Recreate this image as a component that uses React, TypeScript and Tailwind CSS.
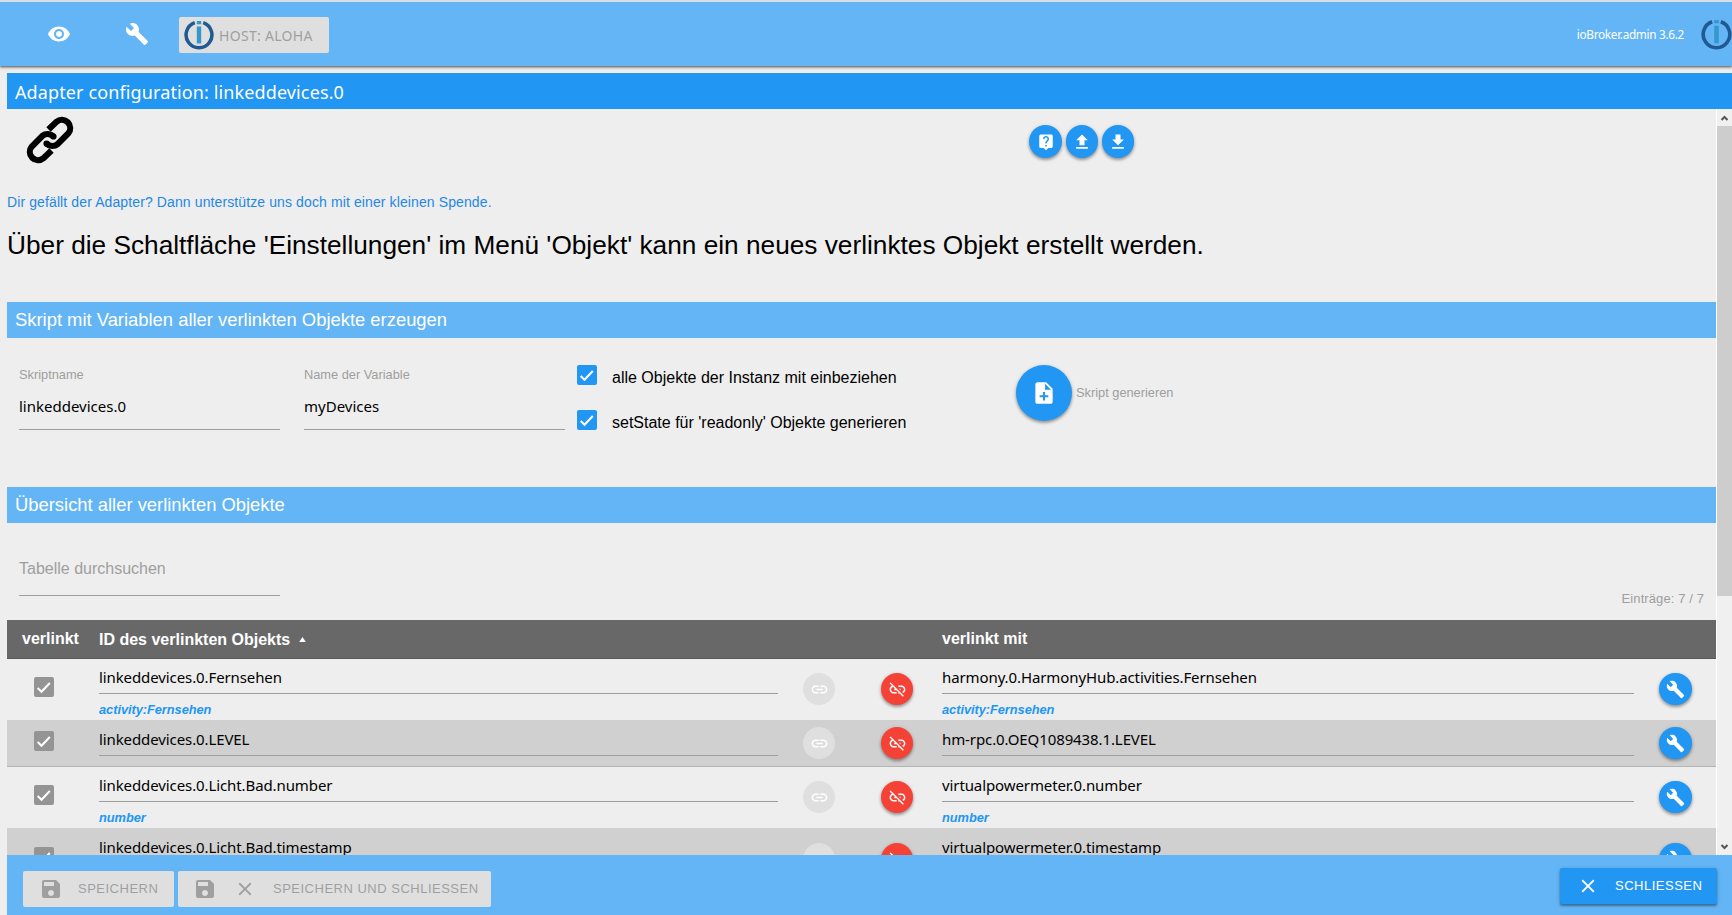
import React from "react";
import { MdVisibility, MdBuild, MdLiveHelp, MdNoteAdd, MdLink, MdSave, MdClose } from "react-icons/md";

const sans = "font-['Liberation_Sans',Arial,sans-serif]";
const humanist = "font-['Noto_Sans','Open_Sans',sans-serif]";
const shadow = "shadow-[0_2px_3px_rgba(0,0,0,0.3),0_1px_4px_rgba(0,0,0,0.15)]";

function UploadIcon({ down = false }: { down?: boolean }) {
  return (
    <svg width="20" height="20" viewBox="0 0 24 24" fill="currentColor">
      {down ? <path d="M19 9h-4V3H9v6H5l7 7 7-7zM5 18v2h14v-2H5z" /> : <path d="M9 16h6v-6h4l-7-7-7 7h4zm-4 2h14v2H5z" />}
    </svg>
  );
}

function Unlink() {
  return (
    <svg width="19" height="19" viewBox="0 0 24 24" fill="currentColor">
      <path d="M17 7h-4v1.9h4c1.71 0 3.1 1.39 3.1 3.1 0 1.43-.98 2.63-2.31 2.98l1.46 1.46C20.88 15.61 22 13.95 22 12c0-2.76-2.24-5-5-5zm-1 4h-2.19l2 2H16zM2 4.27l3.11 3.11C3.29 8.12 2 9.91 2 12c0 2.76 2.24 5 5 5h4v-1.9H7c-1.71 0-3.1-1.39-3.1-3.1 0-1.59 1.21-2.9 2.76-3.07L8.73 11H8v2h2.73L13 15.27V17h1.73l4.01 4L20 19.74 3.27 3 2 4.27z" />
    </svg>
  );
}

function Logo({ size }: { size: number }) {
  return (
    <svg width={size} height={size} viewBox="0 0 30 30" className="shrink-0">
      <path d="M10.800 2.700A12.900 12.900 0 1 0 19.200 2.700" fill="none" stroke="#1f5a92" strokeWidth="3.500" />
      <path d="M12.800 1h4.400v3.200h-4.400zM12.800 6.500h4.400v17h-4.400z" fill="#3399cc" />
    </svg>
  );
}

function ChainIcon() {
  return (
    <svg width="48" height="48" viewBox="0 0 48 48" fill="none" stroke="#000" strokeWidth="6.2">
      <path d="M22.500 13.500L30.500 5.800A8.300 8.300 0 0 1 42.200 17.500L31.500 28.200A8.300 8.300 0 0 1 20.500 27.500" />
      <path d="M25.500 34.500L17.500 42.200A8.300 8.300 0 0 1 5.800 30.500L16.500 19.800A8.300 8.300 0 0 1 27.500 20.500" />
      <path d="M20.500 27.500h0.010M27.500 20.500h0.010" strokeLinecap="round" />
    </svg>
  );
}

function Check({ gray = false }: { gray?: boolean }) {
  return (
    <div className={`flex size-5 shrink-0 items-center justify-center rounded-[2px] ${gray ? "bg-[#949494]" : "bg-[#2196f3]"}`}>
      <svg width="20" height="20" viewBox="0 0 20 20" fill="none" stroke="#fff" strokeWidth="2">
        <path d="M3.700 11L7.500 14.800L15.800 6" />
      </svg>
    </div>
  );
}

function Round({ children, className }: { children: React.ReactNode; className: string }) {
  return <div className={`flex shrink-0 items-center justify-center rounded-full text-white ${className}`}>{children}</div>;
}

function SectionBar({ children }: { children: React.ReactNode }) {
  return <div className="flex h-9 shrink-0 items-center bg-[#64b5f6] px-2 text-[18.400px] text-white">{children}</div>;
}

function Field({ label, value }: { label: string; value: string }) {
  return (
    <div className="w-[261px]">
      <div className="h-[27px] pt-px text-[12.800px] leading-4 text-[#9e9e9e]">{label}</div>
      <div className={`h-[37px] border-b border-[#9e9e9e] pt-[3px] text-[15px] leading-5 text-black ${humanist}`}>{value}</div>
    </div>
  );
}

type Row = { id: string; target: string; note?: string; top: string; checkTop: string; iconTop: string; height: string; bg: string };

const rows: Row[] = [
  { id: "linkeddevices.0.Fernsehen", target: "harmony.0.HarmonyHub.activities.Fernsehen", note: "activity:Fernsehen", top: "pt-2", checkTop: "pt-[18px]", iconTop: "pt-[14px]", height: "h-[61px]", bg: "bg-[#eee]" },
  { id: "linkeddevices.0.LEVEL", target: "hm-rpc.0.OEQ1089438.1.LEVEL", top: "pt-[9px]", checkTop: "pt-[11px]", iconTop: "pt-[7px]", height: "h-[47px]", bg: "bg-[#d0d0d0] border-b border-[#b5b5b5]" },
  { id: "linkeddevices.0.Licht.Bad.number", target: "virtualpowermeter.0.number", note: "number", top: "pt-2", checkTop: "pt-[18px]", iconTop: "pt-[14px]", height: "h-[61px]", bg: "bg-[#eee]" },
  { id: "linkeddevices.0.Licht.Bad.timestamp", target: "virtualpowermeter.0.timestamp", top: "pt-[9px]", checkTop: "pt-[19px]", iconTop: "pt-[15px]", height: "h-[61px]", bg: "bg-[#d0d0d0]" },
];

function Cell({ text, note, className }: { text: string; note?: string; className: string }) {
  return (
    <div className={className}>
      <div className={`h-[27px] border-b border-[#9e9e9e] text-[15px] leading-5 tracking-[-0.1px] whitespace-nowrap text-black ${humanist}`}>{text}</div>
      {note && <div className="mt-2 text-[12.800px] leading-4 font-bold tracking-[-0.04px] text-[#2196f3] italic">{note}</div>}
    </div>
  );
}

function TableRow({ row }: { row: Row }) {
  return (
    <div className={`flex shrink-0 items-start ${row.height} ${row.bg}`}>
      <div className={`w-[92px] shrink-0 pl-[27px] ${row.checkTop}`}><Check gray /></div>
      <Cell text={row.id} note={row.note} className={`w-[679px] shrink-0 ${row.top}`} />
      <div className={`flex w-[164px] shrink-0 gap-[46px] pl-[25px] ${row.iconTop}`}>
        <Round className="size-8 bg-[#dfdfdf]"><MdLink size={19} /></Round>
        <Round className={`size-8 bg-[#f44336] ${shadow}`}><Unlink /></Round>
      </div>
      <Cell text={row.target} note={row.note} className={`w-[692px] shrink-0 ${row.top}`} />
      <div className={`pl-[25px] ${row.iconTop}`}>
        <Round className={`h-8 w-[33px] bg-[#2196f3] ${shadow}`}><MdBuild size={19} /></Round>
      </div>
    </div>
  );
}

function Scrollbar() {
  return (
    <div className="flex w-4 shrink-0 flex-col items-center border-l border-white bg-[#f0f0f0]">
      <svg className="h-[17px] w-[15px] shrink-0" viewBox="0 0 15 17" fill="none" stroke="#555" strokeWidth="2"><path d="M4.500 11L7.500 8L10.500 11" /></svg>
      <div className="h-[470px] w-full shrink-0 bg-[#cdcdcd]" />
      <div className="grow" />
      <svg className="h-[17px] w-[15px] shrink-0" viewBox="0 0 15 17" fill="none" stroke="#555" strokeWidth="2"><path d="M4.500 7L7.500 10L10.500 7" /></svg>
    </div>
  );
}

export default function App() {
  return (
    <div className={`flex h-[915px] w-[1732px] flex-col overflow-hidden bg-[#eee] ${sans}`}>
      <header className="z-10 flex h-[66px] shrink-0 items-start border-t-2 border-[#d9dde2] bg-[#64b5f6] text-white shadow-[0_1px_2px_rgba(0,0,0,0.5),0_2px_3px_rgba(0,0,0,0.2)]">
        <MdVisibility size={24} className="mt-5 ml-[47px]" />
        <MdBuild size={24} className="mt-5 ml-[54px]" />
        <div className={`mt-[15px] ml-[30px] flex h-9 w-[150px] items-center gap-[5px] rounded-[2px] bg-[#dfdfdf] pl-[5px] text-[14px] tracking-[0.3px] text-[#9f9f9f] ${humanist}`}>
          <Logo size={30} />HOST: ALOHA
        </div>
        <div className={`ml-auto flex items-center gap-[17px] pt-[17px] text-[11.800px] tracking-[-0.32px] ${humanist}`}>
          <span>ioBroker.admin 3.6.2</span><Logo size={31} />
        </div>
      </header>
      <div className={`mt-[7px] ml-[7px] flex h-9 shrink-0 items-center bg-[#2196f3] pt-[3px] pl-2 text-[18px] tracking-[0.12px] text-white ${humanist}`}>
        Adapter configuration: linkeddevices.0
      </div>
      <div className="flex h-[746px] shrink-0 pl-[7px]">
        <main className="flex w-[1709px] shrink-0 flex-col overflow-hidden">
          <div className="flex h-[83px] shrink-0 items-start">
            <div className="pt-[7px] pl-[19px]"><ChainIcon /></div>
            <div className="flex gap-1 pt-4 pl-[955px]">
              <Round className={`size-[33px] bg-[#2196f3] ${shadow}`}><MdLiveHelp size={18} /></Round>
              <Round className={`h-[33px] w-8 bg-[#2196f3] ${shadow}`}><UploadIcon /></Round>
              <Round className={`h-[33px] w-8 bg-[#2196f3] ${shadow}`}><UploadIcon down /></Round>
            </div>
          </div>
          <div className="h-[35px] shrink-0 text-[14px] leading-5 tracking-[0.11px] text-[#1e88e5]">Dir gefällt der Adapter? Dann unterstütze uns doch mit einer kleinen Spende.</div>
          <h1 className="h-[75px] shrink-0 text-[26.240px] leading-9 text-black">Über die Schaltfläche 'Einstellungen' im Menü 'Objekt' kann ein neues verlinktes Objekt erstellt werden.</h1>
          <SectionBar>Skript mit Variablen aller verlinkten Objekte erzeugen</SectionBar>
          <div className="flex h-[149px] shrink-0 items-start pl-3">
            <div className="flex gap-6 pt-7"><Field label="Skriptname" value="linkeddevices.0" /><Field label="Name der Variable" value="myDevices" /></div>
            <div className="flex w-[439px] flex-col gap-[22px] pt-[27px] pl-3 text-[16px] leading-5 text-black">
              <div className="flex gap-[15px]"><Check /><span className="pt-[3px]">alle Objekte der Instanz mit einbeziehen</span></div>
              <div className="flex gap-[15px]"><Check /><span className="pt-[3px]">setState für 'readonly' Objekte generieren</span></div>
            </div>
            <div className="flex items-center gap-1 pt-[27px] pl-3 text-[12.800px] text-[#9e9e9e]">
              <div className={`flex size-14 items-center justify-center rounded-full bg-[#2196f3] text-white ${shadow}`}><MdNoteAdd size={26} /></div>
              Skript generieren
            </div>
          </div>
          <SectionBar>Übersicht aller verlinkten Objekte</SectionBar>
          <div className="flex h-[97px] shrink-0 items-start justify-between pr-3 pl-3 text-[#9e9e9e]">
            <div className="mt-9 h-[37px] w-[261px] border-b border-[#9e9e9e] text-[16px] leading-5">Tabelle durchsuchen</div>
            <div className="mt-[68px] text-[13px] leading-4 tracking-[0.1px]">Einträge: 7 / 7</div>
          </div>
          <div className="flex h-[39px] shrink-0 border-b border-[#575757] bg-[#686868] text-[16px] leading-[38px] font-bold text-white">
            <div className="w-[92px] shrink-0 pl-[15px]">verlinkt</div>
            <div className="flex w-[843px] shrink-0 items-center gap-[9px] pt-px">
              ID des verlinkten Objekts
              <svg width="7" height="5" viewBox="0 0 8 6" fill="currentColor"><path d="M0 6L4 0L8 6z" /></svg>
            </div>
            <div>verlinkt mit</div>
          </div>
          {rows.map((row) => <TableRow key={row.id} row={row} />)}
        </main>
        <Scrollbar />
      </div>
      <footer className="z-10 ml-[7px] flex h-[60px] shrink-0 items-start bg-[#64b5f6] pl-4 text-[13px] tracking-[0.5px] whitespace-nowrap text-[#9f9f9f]">
        <div className="mt-4 flex h-9 w-[151px] items-center rounded-[2px] bg-[#dfdfdf] pl-4"><MdSave size={24} /><span className="pl-[15px]">SPEICHERN</span></div>
        <div className="mt-4 ml-1 flex h-9 w-[313px] items-center rounded-[2px] bg-[#dfdfdf] pl-[15px]"><MdSave size={24} /><MdClose size={22} className="ml-[17px]" /><span className="pl-[17px]">SPEICHERN UND SCHLIESSEN</span></div>
        <div className="mt-[13px] mr-[15px] ml-auto flex h-9 w-[157px] items-center rounded-[2px] bg-[#2196f3] pl-[17px] text-white shadow-[0_2px_2px_rgba(0,0,0,0.3),0_1px_4px_rgba(0,0,0,0.2)]"><MdClose size={22} /><span className="pl-4">SCHLIESSEN</span></div>
      </footer>
    </div>
  );
}
